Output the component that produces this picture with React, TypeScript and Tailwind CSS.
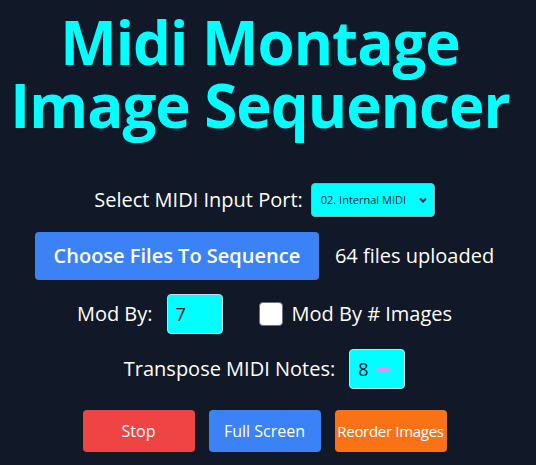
import { useState } from 'react';

export default function App() {
  const [port, setPort] = useState('02');
  const [modBy, setModBy] = useState('7');
  const [modByImages, setModByImages] = useState(false);
  const [transpose, setTranspose] = useState('8');

  return (
    <div className="min-h-screen bg-[#111827] text-white flex flex-col items-center pr-[7px] font-['Open_Sans',sans-serif]">
      {/* Title */}
      <h1 className="mt-[11px] mr-[9px] text-center text-[60px] leading-[63px] font-bold tracking-[-1px] whitespace-nowrap text-[#00ffff]">
        Midi Montage
        <br />
        Image Sequencer
      </h1>

      {/* MIDI port */}
      <div className="mt-[46px] flex items-center gap-2 h-[34px]">
        <label className="text-xl">Select MIDI Input Port:</label>
        <div className="relative">
          <select
            value={port}
            onChange={(e) => setPort(e.target.value)}
            className="appearance-none w-[124px] h-[34px] pl-[9px] pr-5 rounded bg-[#00ffff] border border-gray-400 text-[#1e293b] text-[11px] outline-none"
          >
            <option value="01">01. Midi Through</option>
            <option value="02">02. Internal MIDI</option>
          </select>
          <svg
            className="pointer-events-none absolute right-[7px] top-1/2 -translate-y-1/2 w-[10px] h-[10px] text-[#1e293b]"
            viewBox="0 0 10 10"
            fill="none"
            stroke="currentColor"
            strokeWidth="2"
          >
            <path d="M2 3.5 5 6.5 8 3.5" />
          </svg>
        </div>
      </div>

      {/* File upload */}
      <div className="mt-[15px] flex items-center gap-4">
        <label className="w-[284px] h-[48px] flex items-center justify-center rounded bg-[#3b82f6] text-xl font-semibold cursor-pointer">
          Choose Files To Sequence
          <input type="file" multiple className="hidden" />
        </label>
        <span className="text-xl">64 files uploaded</span>
      </div>

      {/* Mod by */}
      <div className="mt-[14px] flex items-center h-[40px]">
        <label className="text-xl mr-[14px]">Mod By:</label>
        <input
          type="text"
          value={modBy}
          onChange={(e) => setModBy(e.target.value)}
          className="w-[56px] h-[40px] px-2 rounded bg-[#00ffff] border border-gray-300 text-[#111827] text-lg outline-none"
        />
        <input
          type="checkbox"
          checked={modByImages}
          onChange={(e) => setModByImages(e.target.checked)}
          className="appearance-none ml-[36px] w-[24px] h-[24px] bg-white border border-gray-500 rounded-sm"
        />
        <label className="ml-[9px] text-xl">Mod By # Images</label>
      </div>

      {/* Transpose */}
      <div className="mt-[15px] flex items-center gap-[14px] h-[40px]">
        <label className="text-xl">Transpose MIDI Notes:</label>
        <div className="w-[56px] h-[40px] px-2 flex items-center gap-[8px] rounded bg-[#00ffff] border border-gray-300 text-[#111827] text-lg">
          <span>{transpose}</span>
          <span
            className="w-[13px] h-[3px] bg-[#f08cf0]"
            onClick={() => setTranspose(String(Number(transpose) - 1))}
          />
        </div>
      </div>

      {/* Actions */}
      <div className="mt-[21px] flex gap-[14px]">
        <button className="w-[112px] h-[42px] rounded bg-[#ef4444] text-base">Stop</button>
        <button className="w-[112px] h-[42px] rounded bg-[#3b82f6] text-base">Full Screen</button>
        <button className="w-[112px] h-[42px] rounded bg-[#f97316] text-[15px] tracking-[-0.3px] whitespace-nowrap">Reorder Images</button>
      </div>
    </div>
  );
}
